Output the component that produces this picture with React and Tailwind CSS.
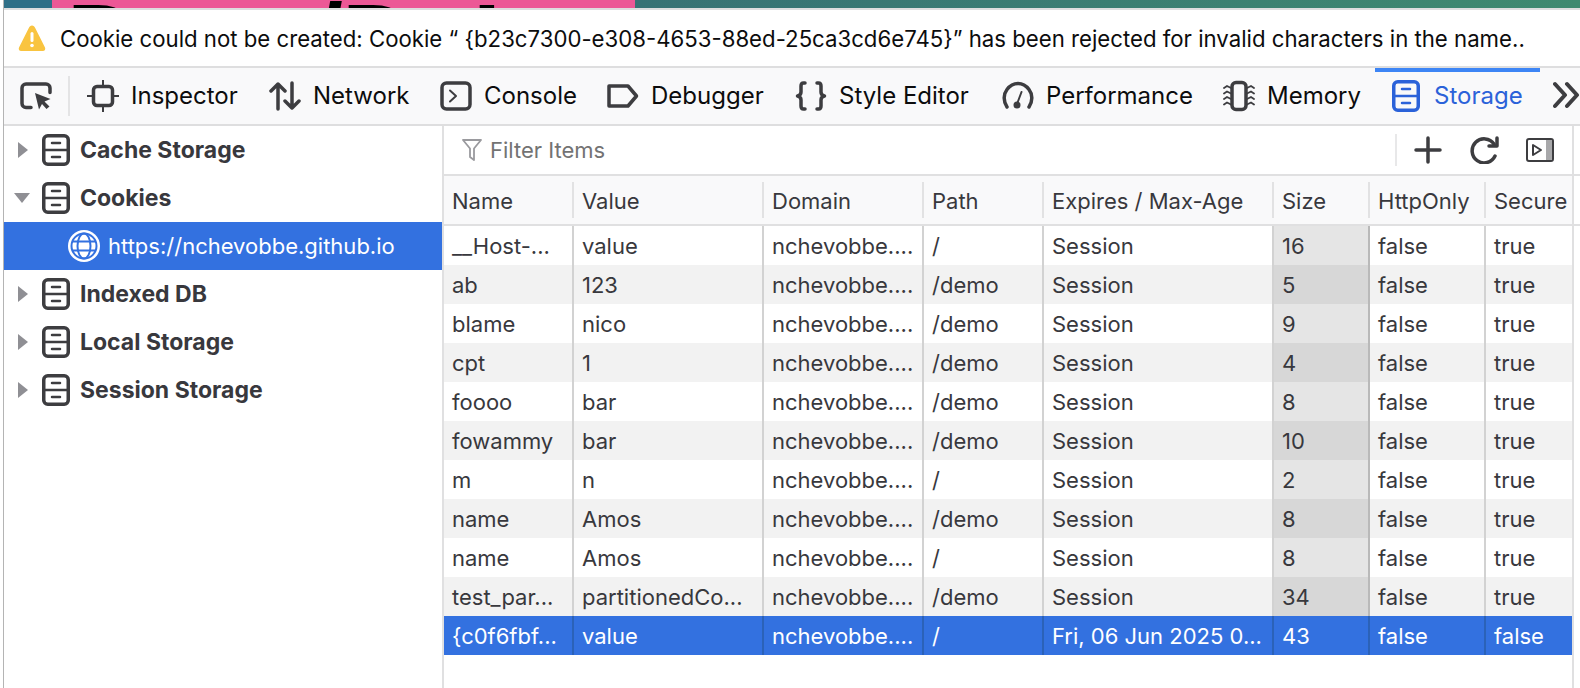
const sans = "font-['Inter','Liberation_Sans',sans-serif]"

const tabs = [
  { name: 'Inspector', w: 'w-[182px]', icon: InspectorIcon },
  { name: 'Network', w: 'w-[171px]', icon: NetworkIcon },
  { name: 'Console', w: 'w-[167px]', icon: ConsoleIcon },
  { name: 'Debugger', w: 'w-[188px]', icon: DebuggerIcon },
  { name: 'Style Editor', w: 'w-[207px]', icon: BracesIcon },
  { name: 'Performance', w: 'w-[221px]', icon: GaugeIcon },
  { name: 'Memory', w: 'w-[169px]', icon: ChipIcon },
]

const sideItems = [
  { name: 'Cache Storage' },
  { name: 'Cookies', open: true },
  { name: 'https://nchevobbe.github.io', child: true },
  { name: 'Indexed DB' },
  { name: 'Local Storage' },
  { name: 'Session Storage' },
]

const columns = ['Name', 'Value', 'Domain', 'Path', 'Expires / Max-Age', 'Size', 'HttpOnly', 'Secure']

const rows = [
  ['__Host-...', 'value', 'nchevobbe....', '/', 'Session', '16', 'false', 'true'],
  ['ab', '123', 'nchevobbe....', '/demo', 'Session', '5', 'false', 'true'],
  ['blame', 'nico', 'nchevobbe....', '/demo', 'Session', '9', 'false', 'true'],
  ['cpt', '1', 'nchevobbe....', '/demo', 'Session', '4', 'false', 'true'],
  ['foooo', 'bar', 'nchevobbe....', '/demo', 'Session', '8', 'false', 'true'],
  ['fowammy', 'bar', 'nchevobbe....', '/demo', 'Session', '10', 'false', 'true'],
  ['m', 'n', 'nchevobbe....', '/', 'Session', '2', 'false', 'true'],
  ['name', 'Amos', 'nchevobbe....', '/demo', 'Session', '8', 'false', 'true'],
  ['name', 'Amos', 'nchevobbe....', '/', 'Session', '8', 'false', 'true'],
  ['test_par...', 'partitionedCo...', 'nchevobbe....', '/demo', 'Session', '34', 'false', 'true'],
  ['{c0f6fbf...', 'value', 'nchevobbe....', '/', 'Fri, 06 Jun 2025 0...', '43', 'false', 'false'],
]

const gridCols = 'grid grid-cols-[128px_190px_160px_120px_230px_96px_116px_88px]'

function InspectorIcon() {
  return (
    <svg width="32" height="32" viewBox="0 0 32 32" fill="none" stroke="#3d3d40">
      <rect x="6.5" y="6.5" width="19" height="19" rx="3.5" strokeWidth="3.5" />
      <path d="M16 0v6M16 26v6M0 16h6M26 16h6" strokeWidth="2" />
    </svg>
  )
}

function NetworkIcon() {
  return (
    <svg width="32" height="32" viewBox="0 0 32 32" fill="none" stroke="#3d3d40" strokeWidth="3.5" strokeLinecap="round" strokeLinejoin="round">
      <path d="M9 29V4M2 11l7-7 7 7M23 3v25M16 21l7 7 7-7" />
    </svg>
  )
}

function ConsoleIcon() {
  return (
    <svg width="32" height="32" viewBox="0 0 32 32" fill="none" stroke="#3d3d40" strokeLinecap="round" strokeLinejoin="round">
      <rect x="2" y="3" width="28" height="26" rx="4.5" strokeWidth="3.5" />
      <path d="M10 10.5l6 5.5-6 5.5" strokeWidth="2" />
    </svg>
  )
}

function DebuggerIcon() {
  return (
    <svg width="32" height="32" viewBox="0 0 32 32" fill="none" stroke="#3d3d40" strokeWidth="3.5" strokeLinejoin="round">
      <path d="M2 6h19l8.5 10L21 26H2z" />
    </svg>
  )
}

function BracesIcon() {
  return (
    <svg width="32" height="32" viewBox="0 0 32 32" fill="none" stroke="#3d3d40" strokeWidth="3.5" strokeLinecap="round" strokeLinejoin="round">
      <path d="M10 3H8.5C6.5 3 6 4.500 6 6v6c0 2-1 3.500-3.500 4C5 16.500 6 18 6 20v6c0 1.500.5 3 2.500 3H10" />
      <path d="M22 3h1.500C25.500 3 26 4.500 26 6v6c0 2 1 3.500 3.500 4-2.500.5-3.500 2-3.500 4v6c0 1.500-.5 3-2.500 3H22" />
    </svg>
  )
}

function GaugeIcon() {
  return (
    <svg width="32" height="32" viewBox="0 0 32 32" fill="none" stroke="#3d3d40" strokeLinecap="round">
      <path d="M5 27C1 21 1.500 14 5 9.500 8 5.500 12 3.500 16 3.500s8 2 11 6c3.500 4.500 4 11.500 0 17.500" strokeWidth="3.500" />
      <path d="M15 24l4.500-12" strokeWidth="2" />
      <circle cx="15" cy="25" r="3.500" fill="#3d3d40" stroke="none" />
    </svg>
  )
}

function ChipIcon() {
  return (
    <svg width="32" height="32" viewBox="0 0 32 32" fill="none" stroke="#3d3d40" strokeLinecap="round">
      <rect x="9" y="2.500" width="14" height="27" rx="4" strokeWidth="3.500" />
      <path d="M8 8L4 6 1 8M8 13.500L4 11.500 1 13.500M8 19L4 17 1 19M8 24.500L4 22.500 1 24.500M24 8l4-2 3 2M24 13.500l4-2 3 2M24 19l4-2 3 2M24 24.500l4-2 3 2" strokeWidth="1.800" />
    </svg>
  )
}

function CabinetIcon({ color = '#3d3d40' }) {
  return (
    <svg width="28" height="32" viewBox="0 0 28 32" fill="none" stroke={color} strokeLinecap="round" className="shrink-0">
      <rect x="1.750" y="1.750" width="24.500" height="28.500" rx="4" strokeWidth="3.500" />
      <path d="M2 16h24" strokeWidth="2.500" />
      <path d="M10 9h8M10 23h8" strokeWidth="2.500" />
    </svg>
  )
}

function GlobeIcon() {
  return (
    <svg width="32" height="32" viewBox="0 0 32 32" className="shrink-0">
      <circle cx="16" cy="16" r="16" fill="#fff" />
      <g fill="none" stroke="#3371e0" strokeWidth="2">
        <ellipse cx="16" cy="16" rx="6.500" ry="12.500" />
        <circle cx="16" cy="16" r="12.500" />
        <path d="M4 11.500h24M4 20.500h24" />
      </g>
    </svg>
  )
}

function SideItem({ item }) {
  if (item.child) {
    return (
      <div className="flex h-12 items-center gap-[8px] bg-[#3371e0] pl-16 text-[22px] text-white">
        <GlobeIcon />
        <span>{item.name}</span>
      </div>
    )
  }
  return (
    <div className="flex h-12 items-center pl-[10px] text-[23px] font-bold text-[#38383d]">
      <div className="flex w-7">
        {item.open ? (
          <div className="h-0 w-0 border-x-8 border-t-[10px] border-x-transparent border-t-[#8f8f94]" />
        ) : (
          <div className="ml-1 h-0 w-0 border-y-8 border-l-[10px] border-y-transparent border-l-[#8f8f94]" />
        )}
      </div>
      <CabinetIcon />
      <span className="ml-[10px]">{item.name}</span>
    </div>
  )
}

function App() {
  return (
    <div className={`${sans} h-[688px] w-[1580px] overflow-hidden bg-white pl-[3px] text-[#38383d]`}>
      <div className="flex h-full flex-col border-l border-[#b4b4b4]">
        {/* page behind the devtools */}
        <div className="flex h-2 shrink-0">
          <div className="w-12 bg-[#2f6f87]" />
          <div className="relative w-[583px] overflow-hidden bg-[#ec5896] font-['Liberation_Sans'] text-[100px] font-bold leading-none text-black">
            <span className="absolute left-[15px] top-[-11px]">D</span>
            <span className="absolute left-[263px] top-[-11px]">/</span>
            <span className="absolute left-[290px] top-[-11px]">D</span>
            <span className="absolute left-[421px] top-[-11px]">I</span>
          </div>
          <div className="flex-1 bg-gradient-to-r from-[#377275] to-[#3f8a70]" />
        </div>

        {/* notification */}
        <div className="flex h-[60px] shrink-0 items-center border-y-2 border-[#dededf] bg-white pl-[14px] text-[22.2px] text-[#0c0c0d]">
          <svg width="28" height="28" viewBox="0 0 28 28" className="shrink-0">
            <path d="M14 1.500c1.500 0 2.500 1 3.200 2.500l9.800 19.500c.8 1.800-.2 3.500-2.200 3.500H3.200c-2 0-3-1.700-2.200-3.500L10.800 4c.7-1.500 1.700-2.500 3.200-2.500z" fill="#f9c440" />
            <rect x="12.500" y="8" width="3" height="10" rx="1.500" fill="#fff" />
            <circle cx="14" cy="21.500" r="1.800" fill="#fff" />
          </svg>
          <span className="ml-[14px] whitespace-nowrap pt-0.5">Cookie could not be created: Cookie “ {'{'}b23c7300-e308-4653-88ed-25ca3cd6e745{'}'}” has been rejected for invalid characters in the name..</span>
        </div>

        {/* toolbar */}
        <div className="flex h-[58px] shrink-0 border-b-2 border-[#dededf] bg-[#f9f9fa]">
          <div className="flex w-[66px] shrink-0 items-center pl-4">
            <svg width="32" height="28" viewBox="0 0 32 28" fill="none">
              <path d="M11 25.500H6A4 4 0 0 1 2 21.500V6A4 4 0 0 1 6 2H26A4 4 0 0 1 30 6V10.500" stroke="#3d3d40" strokeWidth="3.500" strokeLinecap="round" />
              <path d="M15 11l15.500 6-6 2.500 5 5-3 2.500-4.500-5-3 5.500z" fill="#3d3d40" />
            </svg>
            <div className="ml-4 h-10 w-0.5 bg-[#e4e4e5]" />
          </div>
          {tabs.map((t) => {
            const Icon = t.icon
            return (
              <div key={t.name} className={`flex ${t.w} shrink-0 items-center gap-3 pl-[17px] text-[24px] text-[#0c0c0d]`}>
                <Icon />
                <span className="whitespace-nowrap">{t.name}</span>
              </div>
            )
          })}
          <div className="flex w-[165px] shrink-0 items-center gap-[14px] border-t-4 border-[#3d85f5] pb-1 pl-[17px] text-[24px] text-[#2b62d9]">
            <CabinetIcon color="#2b62d9" />
            <span>Storage</span>
          </div>
          <svg width="27" height="28" viewBox="0 0 27 28" fill="none" stroke="#3d3d40" strokeWidth="4" strokeLinecap="round" strokeLinejoin="round" className="ml-[13px] mt-[13px] shrink-0">
            <path d="M2 3l10 11L2 25M14 3l10 11-10 11" />
          </svg>
        </div>

        <div className="flex min-h-0 flex-1">
          {/* sidebar */}
          <div className="w-[438px] shrink-0">
            {sideItems.map((s) => (
              <SideItem key={s.name} item={s} />
            ))}
          </div>

          {/* table */}
          <div className="w-[1132px] shrink-0 border-x-2 border-[#e0e0e1]">
            <div className="flex h-[50px] items-center border-b-2 border-[#e0e0e1] pl-[18px] text-[22px] text-[#737373]">
              <svg width="20" height="22" viewBox="0 0 20 22" fill="none" stroke="#9a9a9e" strokeWidth="1.800" strokeLinejoin="round">
                <path d="M1 1h18l-7 8.500V21l-4-3V9.500z" />
              </svg>
              <span className="ml-2">Filter Items</span>
              <div className="ml-auto mr-[17px] h-8 w-0.5 bg-[#e8e8e9]" />
              <svg width="28" height="28" viewBox="0 0 28 28" fill="none" stroke="#3d3d40" strokeWidth="3.500" strokeLinecap="round">
                <path d="M14 2v24M2 14h24" />
              </svg>
              <svg width="30" height="28" viewBox="0 0 30 28" fill="none" stroke="#3d3d40" strokeWidth="3.500" strokeLinecap="round" strokeLinejoin="round" className="ml-7">
                <path d="M25 20a12 12 0 1 1-1-12" />
                <path d="M27 2v8h-8" />
              </svg>
              <svg width="28" height="24" viewBox="0 0 28 24" fill="none" className="ml-[26px] mr-[18px]">
                <rect x="1" y="1" width="26" height="22" rx="2" stroke="#3d3d40" strokeWidth="2" />
                <rect x="20" y="2" width="6" height="20" fill="#a8a8aa" />
                <path d="M7 7v10l8-5z" stroke="#3d3d40" strokeWidth="2" strokeLinejoin="round" />
              </svg>
            </div>

            <div className={`${gridCols} h-[50px] border-b-2 border-[#e0e0e1] bg-[#f9f9fa] text-[22px]`}>
              {columns.map((c, i) => (
                <div key={c} className="flex items-center pl-2">
                  {i > 0 && <div className="ml-[-8px] mr-2 h-9 w-0.5 shrink-0 bg-[#e2e2e3]" />}
                  <span className="whitespace-nowrap pt-0.5">{c}</span>
                </div>
              ))}
            </div>

            {rows.map((row, r) => {
              const selected = r === rows.length - 1
              const stripe = r % 2 === 1
              return (
                <div key={r} className={`${gridCols} h-[39px] text-[22px] ${selected ? 'bg-[#3371e0] text-white' : stripe ? 'bg-[#f2f2f2]' : 'bg-white'}`}>
                  {row.map((cell, i) => (
                    <div
                      key={i}
                      className={`flex items-center whitespace-nowrap pl-2 pt-0.5 ${i > 0 ? 'border-l-2' : ''} ${
                        selected
                          ? 'border-[#2b62b8]'
                          : i === 6
                            ? 'border-[#b9b9b9]'
                            : 'border-[#d2d2d2]'
                      } ${!selected && i === 5 ? (stripe ? 'bg-[#d7d7d7]' : 'bg-[#e5e5e5]') : ''}`}
                    >
                      {cell}
                    </div>
                  ))}
                </div>
              )
            })}
          </div>

          {/* sliver past the table's edge */}
          <div className="flex-1">
            <div className="h-[50px] border-b-2 border-[#e0e0e1]" />
            <div className="h-[50px] border-b-2 border-[#e0e0e1]" />
          </div>
        </div>
      </div>
    </div>
  )
}

export default App
